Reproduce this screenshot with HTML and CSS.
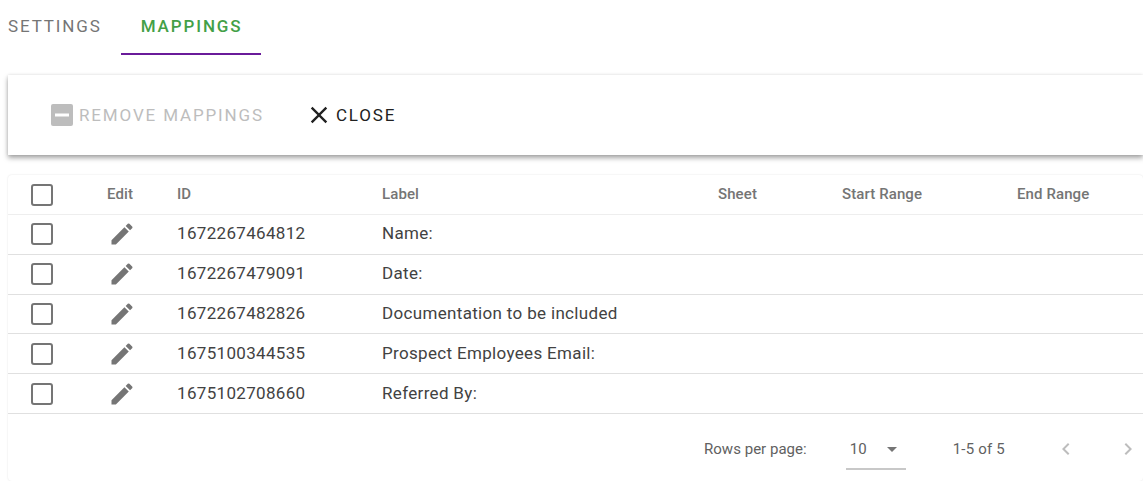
FILE: index.html
```html
<!DOCTYPE html>
<html lang="en">
<head>
  <meta charset="UTF-8" />
  <title>Mappings</title>
  <link rel="stylesheet" href="styles.css">
</head>
<body>

<div class="tabs">
  <div class="tab">SETTINGS</div>
  <div class="tab active">MAPPINGS</div>
</div>

<div class="toolbar">
  <div class="tool-btn disabled">
    <svg class="minus-icon" width="26" height="26" viewBox="0 0 26 26"><rect x="2" y="2" width="22" height="22" rx="2" fill="#bdbdbd"/><rect x="6" y="11.5" width="14" height="3" fill="#fff"/></svg>
    <span>REMOVE MAPPINGS</span>
  </div>
  <div class="tool-btn">
    <svg width="28" height="28" viewBox="0 0 24 24"><path fill="#212121" d="M19 6.41 17.59 5 12 10.59 6.41 5 5 6.41 10.59 12 5 17.59 6.41 19 12 13.41 17.59 19 19 17.59 13.41 12z"/></svg>
    <span>CLOSE</span>
  </div>
</div>

<div class="card">
  <div class="row head">
    <div class="cell-check"><span class="box"></span></div>
    <div class="cell-edit">Edit</div>
    <div>ID</div>
    <div>Label</div>
    <div>Sheet</div>
    <div>Start Range</div>
    <div>End Range</div>
  </div>
  <div class="row">
    <div class="cell-check"><span class="box"></span></div>
    <div class="cell-edit"><svg class="pencil" viewBox="0 0 24 24"><path d="M3 17.25V21h3.75L17.81 9.94l-3.75-3.75L3 17.25zM20.71 7.04a1 1 0 0 0 0-1.41l-2.34-2.34a1 1 0 0 0-1.41 0l-1.83 1.83 3.75 3.75 1.83-1.83z"/></svg></div>
    <div>1672267464812</div>
    <div>Name:</div>
    <div></div><div></div><div></div>
  </div>
  <div class="row">
    <div class="cell-check"><span class="box"></span></div>
    <div class="cell-edit"><svg class="pencil" viewBox="0 0 24 24"><path d="M3 17.25V21h3.75L17.81 9.94l-3.75-3.75L3 17.25zM20.71 7.04a1 1 0 0 0 0-1.41l-2.34-2.34a1 1 0 0 0-1.41 0l-1.83 1.83 3.75 3.75 1.83-1.83z"/></svg></div>
    <div>1672267479091</div>
    <div>Date:</div>
    <div></div><div></div><div></div>
  </div>
  <div class="row">
    <div class="cell-check"><span class="box"></span></div>
    <div class="cell-edit"><svg class="pencil" viewBox="0 0 24 24"><path d="M3 17.25V21h3.75L17.81 9.94l-3.75-3.75L3 17.25zM20.71 7.04a1 1 0 0 0 0-1.41l-2.34-2.34a1 1 0 0 0-1.41 0l-1.83 1.83 3.75 3.75 1.83-1.83z"/></svg></div>
    <div>1672267482826</div>
    <div>Documentation to be included</div>
    <div></div><div></div><div></div>
  </div>
  <div class="row">
    <div class="cell-check"><span class="box"></span></div>
    <div class="cell-edit"><svg class="pencil" viewBox="0 0 24 24"><path d="M3 17.25V21h3.75L17.81 9.94l-3.75-3.75L3 17.25zM20.71 7.04a1 1 0 0 0 0-1.41l-2.34-2.34a1 1 0 0 0-1.41 0l-1.83 1.83 3.75 3.75 1.83-1.83z"/></svg></div>
    <div>1675100344535</div>
    <div>Prospect Employees Email:</div>
    <div></div><div></div><div></div>
  </div>
  <div class="row">
    <div class="cell-check"><span class="box"></span></div>
    <div class="cell-edit"><svg class="pencil" viewBox="0 0 24 24"><path d="M3 17.25V21h3.75L17.81 9.94l-3.75-3.75L3 17.25zM20.71 7.04a1 1 0 0 0 0-1.41l-2.34-2.34a1 1 0 0 0-1.41 0l-1.83 1.83 3.75 3.75 1.83-1.83z"/></svg></div>
    <div>1675102708660</div>
    <div>Referred By:</div>
    <div></div><div></div><div></div>
  </div>
  <div class="pager">
    <span class="rows-label">Rows per page:</span>
    <div class="select">
      <span>10</span>
      <svg width="24" height="24" viewBox="0 0 24 24"><path fill="#757575" d="M7 10l5 5 5-5z"/></svg>
    </div>
    <span class="range">1-5 of 5</span>
    <div class="pager-arrows">
      <svg width="24" height="24" viewBox="0 0 24 24"><path fill="#bdbdbd" d="M15.41 7.41 14 6l-6 6 6 6 1.41-1.41L10.83 12z"/></svg>
      <svg width="24" height="24" viewBox="0 0 24 24"><path fill="#bdbdbd" d="M10 6 8.59 7.41 13.17 12l-4.58 4.59L10 18l6-6z"/></svg>
    </div>
  </div>
</div>

</body>
</html>
```

FILE: styles.css
```css
* {
  box-sizing: border-box;
}
html, body {
  overflow: hidden;
}
body {
  margin: 0;
  height: 481px;
  background: #fff;
  font-family: Roboto, sans-serif;
  color: #424242;
}
.tabs {
  display: flex;
  height: 55px;
  margin-bottom: 20px;
}
.tab {
  padding: 16px 19px 0 8px;
  font-size: 17px;
  font-weight: 400;
  letter-spacing: 1.87px;
  line-height: 20px;
  color: #757575;
}
.tab.active {
  padding-left: 20px;
  color: #43a047;
  font-weight: 500;
  border-bottom: 2px solid #6a1b9a;
}
.toolbar {
  display: flex;
  align-items: center;
  gap: 41px;
  height: 80px;
  margin-left: 8px;
  padding-left: 41px;
  background: #fff;
  box-shadow: 0 3px 5px rgba(0,0,0,0.35), 0 0 3px rgba(0,0,0,0.1);
}
.tool-btn {
  display: flex;
  align-items: center;
  gap: 3px;
  font-size: 17px;
  letter-spacing: 1.85px;
  color: #212121;
}
.tool-btn.disabled {
  gap: 4px;
  color: #bdbdbd;
}
.card {
  margin: 20px 0 0 8px;
  height: 306px;
  background: #fff;
  border-radius: 4px;
  box-shadow: 0 0 2px rgba(0,0,0,0.12);
}
.row {
  display: grid;
  grid-template-columns: 99px 70px 205px 336px 124px 175px 1fr;
  align-items: center;
  height: 39.8px;
  font-size: 17px;
  letter-spacing: 0.33px;
  border-bottom: 1px solid #e0e0e0;
}
.row > div {
  padding-bottom: 2px;
}
.row.head {
  height: 40px;
  font-size: 15px;
  font-weight: 500;
  letter-spacing: 0.1px;
  color: #757575;
  border-bottom-color: #eeeeee;
}
.row > .cell-check {
  padding: 0 0 0 23px;
}
.box {
  display: block;
  width: 22px;
  height: 22px;
  border: 2px solid #757575;
  border-radius: 3px;
}
.pencil {
  display: block;
  width: 28px;
  height: 28px;
  margin: 0 0 -2px 1px;
  fill: #757575;
}
.pager {
  display: flex;
  align-items: center;
  height: 70px;
  padding-left: 696px;
  font-size: 15px;
  letter-spacing: 0.03px;
  color: #616161;
}
.select {
  display: flex;
  align-items: center;
  justify-content: space-between;
  width: 60px;
  height: 42px;
  margin-left: 39px;
  padding: 2px 2px 0 4px;
  border-bottom: 2px solid #c8c8c8;
}
.range {
  margin-left: 47px;
  letter-spacing: 0.2px;
}
.pager-arrows {
  display: flex;
  gap: 38px;
  margin-left: 49px;
}
```
